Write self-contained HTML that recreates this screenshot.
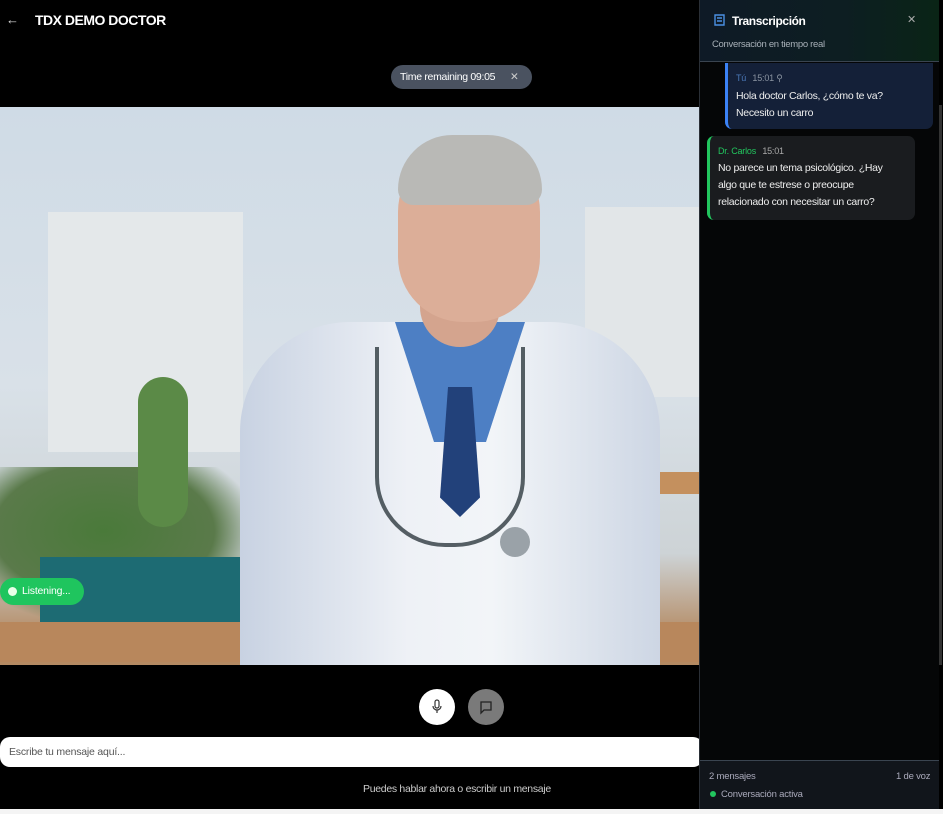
<!DOCTYPE html>
<html><head><meta charset="utf-8"><style>
*{margin:0;padding:0;box-sizing:border-box}
body{width:943px;height:814px;background:#000;font-family:"Liberation Sans",sans-serif;position:relative;overflow:hidden;color:#fff;letter-spacing:-0.2px}
.abs{position:absolute}
</style></head><body>
<div class="abs" style="left:0;top:0;width:943px;height:814px;background:#000"></div>
<!-- header -->
<div class="abs" style="left:6px;top:12px;font-size:13px;color:#ddd">&#8592;</div>
<div class="abs" style="left:35px;top:12px;font-size:14px;font-weight:bold;letter-spacing:-0.5px">TDX DEMO DOCTOR</div>
<div class="abs" style="left:391px;top:65px;width:141px;height:24px;border-radius:12px;background:#4a5260;font-size:10.5px;line-height:24px;padding-left:9px;color:#fff;letter-spacing:-0.3px">Time remaining 09:05<span style="position:absolute;left:119px;color:#ccc">✕</span></div>
<!-- video -->
<div class="abs" style="left:0;top:107px;width:700px;height:558px;overflow:hidden;background:linear-gradient(180deg,#cfdbe6 0%,#d9e1e8 50%,#cdd3d6 80%,#b48a62 95%)">
 <div class="abs" style="left:48px;top:105px;width:195px;height:240px;background:#e4e8ea"></div>
 <div class="abs" style="left:585px;top:100px;width:115px;height:190px;background:#e2e6e8"></div>
 <div class="abs" style="left:0;top:360px;width:260px;height:160px;background:radial-gradient(ellipse at 40% 40%,#4a7a3a,#5a7a4a 50%,transparent 70%)"></div>
 <div class="abs" style="left:138px;top:270px;width:50px;height:150px;border-radius:25px;background:#5b8a47"></div>
 <div class="abs" style="left:40px;top:450px;width:210px;height:80px;background:#1d6b73"></div>
 <div class="abs" style="left:0;top:515px;width:700px;height:40px;background:#b8875c"></div>
 <div class="abs" style="left:660px;top:365px;width:40px;height:22px;background:#c4905e"></div>
 <!-- coat -->
 <div class="abs" style="left:240px;top:215px;width:420px;height:360px;border-radius:110px 110px 0 0;background:linear-gradient(90deg,#c8d2e2,#eef1f6 40%,#f2f5f8 60%,#cdd6e4)"></div>
 <div class="abs" style="left:395px;top:215px;width:130px;height:120px;background:#4d7fc4;clip-path:polygon(0 0,100% 0,70% 100%,30% 100%)"></div>
 <div class="abs" style="left:440px;top:280px;width:40px;height:130px;background:#22417a;clip-path:polygon(20% 0,80% 0,100% 85%,50% 100%,0 85%)"></div>
 <div class="abs" style="left:375px;top:240px;width:150px;height:200px;border:4px solid #2f3a40;border-top:none;border-radius:0 0 70px 70px;opacity:.8"></div>
 <!-- neck/face -->
 <div class="abs" style="left:420px;top:160px;width:80px;height:80px;background:#d4a48e;border-radius:0 0 40px 40px"></div>
 <div class="abs" style="left:398px;top:35px;width:142px;height:180px;border-radius:70px 70px 65px 65px;background:#dcae98"></div>
 <div class="abs" style="left:398px;top:28px;width:144px;height:70px;border-radius:70px 70px 20px 20px;background:#b9b9b6"></div>
 <div class="abs" style="left:500px;top:420px;width:30px;height:30px;border-radius:50%;background:#9aa2a8"></div>
</div>
<div class="abs" style="left:0;top:578px;width:84px;height:27px;border-radius:14px;background:#1fc55e;font-size:10.5px;line-height:27px;padding-left:22px">Listening...</div>
<div class="abs" style="left:8px;top:587px;width:9px;height:9px;border-radius:50%;background:#e8ffe8"></div>
<!-- controls -->
<div class="abs" style="left:419px;top:689px;width:36px;height:36px;border-radius:50%;background:#fff"><svg width="36" height="36"><rect x="16" y="11" width="4" height="8" rx="2" fill="none" stroke="#333" stroke-width="1.2"/><path d="M14 17a4 4 0 0 0 8 0M18 21v3" fill="none" stroke="#333" stroke-width="1.2"/></svg></div>
<div class="abs" style="left:468px;top:689px;width:36px;height:36px;border-radius:50%;background:#7a7a7a"><svg width="36" height="36"><path d="M13 13h10v8h-7l-3 3z" fill="none" stroke="#222" stroke-width="1.3"/></svg></div>
<div class="abs" style="left:0;top:737px;width:703px;height:30px;border-radius:10px;background:#fff;font-size:10.5px;color:#555;line-height:30px;padding-left:9px">Escribe tu mensaje aquí...</div>
<div class="abs" style="left:363px;top:783px;font-size:10.5px;color:#ccc;letter-spacing:-0.3px">Puedes hablar ahora o escribir un mensaje</div>
<div class="abs" style="left:0;top:809px;width:943px;height:5px;background:#f4f4f4"></div>
<!-- sidebar -->
<div class="abs" style="left:699px;top:0;width:240px;height:809px;background:#050607;border-left:1px solid #2a2f36"></div>
<div class="abs" style="left:700px;top:0;width:239px;height:62px;background:linear-gradient(90deg,#0e1a26,#0d1e22 60%,#0a2416);border-bottom:1px solid #3a4450"></div>
<svg class="abs" style="left:712px;top:13px" width="14" height="14"><path d="M3 2h9v10H3zM5 5h5M5 8h5" fill="none" stroke="#4a90e2" stroke-width="1.4"/></svg>
<div class="abs" style="left:732px;top:14px;font-size:12px;font-weight:bold;letter-spacing:-0.4px">Transcripción</div>
<div class="abs" style="left:907px;top:13px;font-size:11px;color:#aaa">✕</div>
<div class="abs" style="left:712px;top:39px;font-size:9.5px;color:#a8b0b8;letter-spacing:-0.3px">Conversación en tiempo real</div>
<div class="abs" style="left:725px;top:63px;width:208px;height:66px;border-radius:0 0 7px 7px;background:#142038;border-left:3px solid #3b82f6"></div>
<div class="abs" style="left:736px;top:73px;font-size:9px;color:#4a78b8">Tú <span style="color:#8a93a0;margin-left:4px">15:01 ⚲</span></div>
<div class="abs" style="left:736px;top:88px;font-size:10.5px;line-height:17px;color:#eee;letter-spacing:-0.3px">Hola doctor Carlos, ¿cómo te va?<br>Necesito un carro</div>
<div class="abs" style="left:707px;top:136px;width:208px;height:84px;border-radius:7px;background:#1a1c1f;border-left:3px solid #22c55e"></div>
<div class="abs" style="left:718px;top:146px;font-size:9px;color:#22c55e">Dr. Carlos <span style="color:#aaa;margin-left:4px">15:01</span></div>
<div class="abs" style="left:718px;top:160px;font-size:10.5px;line-height:17px;color:#eee;letter-spacing:-0.3px">No parece un tema psicológico. ¿Hay<br>algo que te estrese o preocupe<br>relacionado con necesitar un carro?</div>
<div class="abs" style="left:939px;top:105px;width:3px;height:560px;background:#333"></div>
<div class="abs" style="left:700px;top:760px;width:239px;height:49px;background:#11151b;border-top:1px solid #3a4450"></div>
<div class="abs" style="left:709px;top:771px;font-size:9.5px;color:#aab">2 mensajes</div>
<div class="abs" style="left:896px;top:771px;font-size:9.5px;color:#aab">1 de voz</div>
<div class="abs" style="left:710px;top:791px;width:6px;height:6px;border-radius:50%;background:#22c55e"></div>
<div class="abs" style="left:721px;top:789px;font-size:9.5px;color:#aab">Conversación activa</div>
</body></html>
